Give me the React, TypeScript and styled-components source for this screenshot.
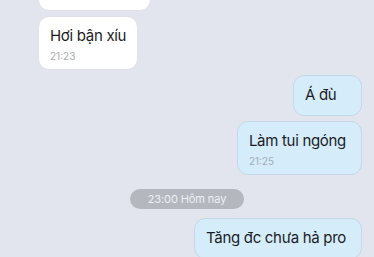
import React from 'react';
import styled, { createGlobalStyle } from 'styled-components';

type Message = {
  id: number;
  mine: boolean;
  text: string;
  time?: string;
};

const before: Message[] = [
  { id: 1, mine: false, text: 'Ừ để mai nha' },
  { id: 2, mine: false, text: 'Hơi bận xíu', time: '21:23' },
  { id: 3, mine: true, text: 'Á đù' },
  { id: 4, mine: true, text: 'Làm tui ngóng', time: '21:25' },
];

const after: Message[] = [{ id: 5, mine: true, text: 'Tăng đc chưa hả pro' }];

const App: React.FC = () => {
  const renderMessage = (m: Message) => (
    <Row key={m.id} $mine={m.mine}>
      <Bubble $mine={m.mine} $hasTime={!!m.time}>
        <Text>{m.text}</Text>
        {m.time && <Time>{m.time}</Time>}
      </Bubble>
    </Row>
  );

  return (
    <>
      <GlobalStyle />
      <Screen>
        <Thread>
          {before.map(renderMessage)}
          <DateRow>
            <DatePill>23:00 Hôm nay</DatePill>
          </DateRow>
          {after.map(renderMessage)}
        </Thread>
      </Screen>
    </>
  );
};

export default App;

// Styles
const GlobalStyle = createGlobalStyle`
  html, body {
    margin: 0;
    padding: 0;
    background: #e2e5ee;
  }
  body {
    font-family: Inter, "Noto Sans", "Liberation Sans", sans-serif;
    -webkit-font-smoothing: antialiased;
  }
`;

const Screen = styled.div`
  width: 374px;
  height: 257px;
  overflow: hidden;
  background: #e2e5ee;
`;

const Thread = styled.div`
  display: flex;
  flex-direction: column;
  gap: 5px;
  margin-top: -30px;
  padding: 0 12px 0 38px;
`;

const Row = styled.div<{ $mine: boolean }>`
  display: flex;
  justify-content: ${(p) => (p.$mine ? 'flex-end' : 'flex-start')};
`;

const Bubble = styled.div<{ $mine: boolean; $hasTime: boolean }>`
  box-sizing: border-box;
  min-width: ${(p) => (p.$mine ? '69px' : '0')};
  padding: 9px ${(p) => (p.$mine ? '15px' : '11px')}
    ${(p) => (p.$hasTime ? '8px' : '9px')} 11px;
  border-radius: 11px;
  background: ${(p) => (p.$mine ? '#d5ecfb' : '#ffffff')};
  border: 1px solid ${(p) => (p.$mine ? '#c3d8e8' : '#dfe2e8')};
`;

const Text = styled.div`
  margin-top: -1px;
  font-size: 15px;
  line-height: 22px;
  letter-spacing: -0.3px;
  color: #1b1c1f;
  white-space: nowrap;
`;

const Time = styled.div`
  margin-top: 3px;
  margin-bottom: -1px;
  font-size: 10px;
  line-height: 12px;
  color: #a7abb3;
`;

const DateRow = styled.div`
  display: flex;
  justify-content: center;
  margin: 9px 0 4px -26px;
`;

const DatePill = styled.div`
  height: 20px;
  padding: 0 18px;
  border-radius: 10px;
  background: #b4b7be;
  color: #eef0f4;
  font-size: 11px;
  line-height: 20px;
  letter-spacing: -0.1px;
`;
